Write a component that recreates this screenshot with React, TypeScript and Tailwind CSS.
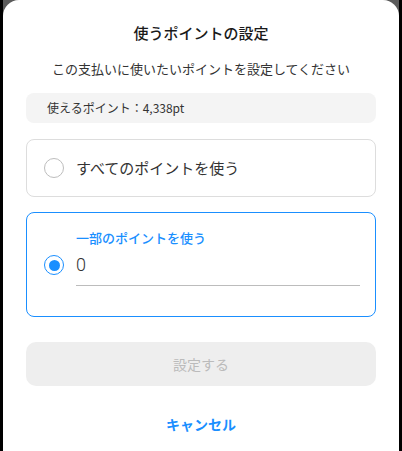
import React from "react";

export default function App() {
  const font = { fontFamily: '"Noto Sans CJK JP", "Noto Sans", sans-serif' };
  return (
    <div className="w-[402px] h-[451px] bg-black px-[3px] overflow-hidden" style={font}>
      <div className="h-full bg-[#5b5b5b]">
        <div className="h-full bg-white rounded-t-[16px] flex flex-col px-[23px]">
          <h1 className="pt-[22px] text-center text-[15px] leading-[22px] font-medium text-[#1a1a1a]">
            使うポイントの設定
          </h1>
          <p className="mt-[15px] text-center text-[13px] leading-[20px] text-[#333]">
            この支払いに使いたいポイントを設定してください
          </p>
          <div className="mt-[14px] h-[30px] rounded-[8px] bg-[#f4f4f4] flex items-center pl-[21px] text-[12px] text-[#333]">
            使えるポイント：4,338pt
          </div>

          <div className="mt-[16px] h-[58px] rounded-[8px] border border-[#dddddd] flex items-center pl-[17px]">
            <span className="w-[20px] h-[20px] rounded-full border border-[#bdbdbd] box-border" />
            <span className="ml-[12px] text-[15px] leading-[20px] text-[#333]">すべてのポイントを使う</span>
          </div>

          <div className="mt-[15px] rounded-[8px] border border-[#1a8fff] pt-[16px] pb-[30px] pl-[17px] pr-[15px] grid grid-cols-[20px_1fr] gap-x-[12px]">
            <div />
            <div className="text-[13px] leading-[18px] font-medium text-[#1a8fff]">一部のポイントを使う</div>
            <span className="mt-[8px] w-[20px] h-[20px] rounded-full border-[1.5px] border-[#1a8fff] flex items-center justify-center box-border">
              <span className="w-[11px] h-[11px] rounded-full bg-[#1a8fff]" />
            </span>
            <div
              className="mt-[8px] pb-[10px] border-b border-[#bcbcbc] text-[18px] leading-[20px] font-light text-[#333]"
              style={{ fontFamily: 'Roboto, "Noto Sans CJK JP", sans-serif' }}
            >
              0
            </div>
          </div>

          <div className="mt-[25px] h-[44px] rounded-[10px] bg-[#eeeeee] flex items-center justify-center text-[14px] text-[#bbbbbb]">
            設定する
          </div>

          <div className="mt-[28px] text-center text-[14px] leading-[20px] font-bold text-[#1a8fff]">
            キャンセル
          </div>
        </div>
      </div>
    </div>
  );
}
